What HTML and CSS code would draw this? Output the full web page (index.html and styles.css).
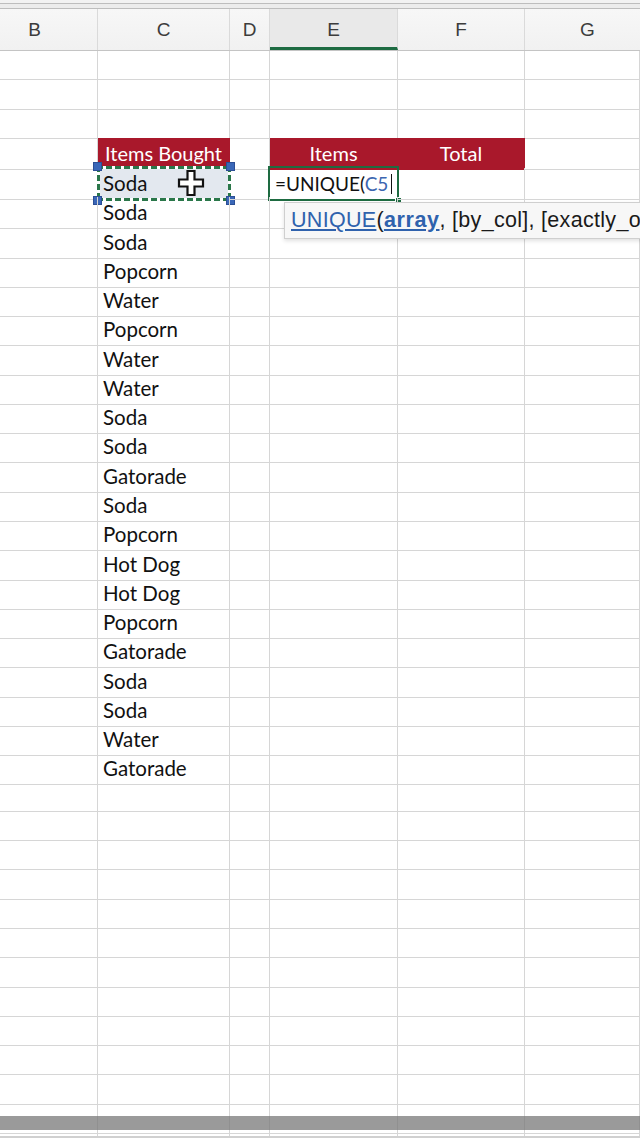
FILE: index.html
```html
<!DOCTYPE html>
<html>
<head>
<meta charset="utf-8">
<title>Sheet</title>
<link rel="stylesheet" href="styles.css">
</head>
<body>
<div class="app">
  <div class="topstrip"></div>
  <div class="colheads">
    <div class="ch ch-b">B</div>
    <div class="ch">C</div>
    <div class="ch">D</div>
    <div class="ch active">E</div>
    <div class="ch">F</div>
    <div class="ch ch-g">G</div>
  </div>
  <div class="sheet">
    <div class="row"><div class="cell"></div><div class="cell"></div><div class="cell"></div><div class="cell"></div><div class="cell"></div><div class="cell"></div></div>
    <div class="row"><div class="cell"></div><div class="cell"></div><div class="cell"></div><div class="cell"></div><div class="cell"></div><div class="cell"></div></div>
    <div class="row"><div class="cell"></div><div class="cell"></div><div class="cell"></div><div class="cell"></div><div class="cell"></div><div class="cell"></div></div>
    <div class="row"><div class="cell"></div><div class="cell hdr">Items Bought</div><div class="cell"></div><div class="cell hdr">Items</div><div class="cell hdr">Total</div><div class="cell"></div></div>
    <div class="row">
      <div class="cell"></div>
      <div class="cell txt sel">Soda
        <span class="ants"></span>
        <span class="hd tl"></span><span class="hd tr"></span><span class="hd bl"></span><span class="hd br"></span>
        <svg class="cursor" width="28" height="28" viewBox="0 0 28 28"><path d="M10.5 2h7v8.5H26v7h-8.5V26h-7v-8.5H2v-7h8.5z" fill="#fff" stroke="#111" stroke-width="2.2" stroke-linejoin="miter"/></svg>
      </div>
      <div class="cell"></div>
      <div class="cell edit"><span class="formula">=UNIQUE(<span class="ref">C5</span></span><span class="caret"></span><span class="editbox"></span><span class="fillh"></span></div>
      <div class="cell"></div><div class="cell"></div>
    </div>
    <div class="row"><div class="cell"></div><div class="cell txt">Soda</div><div class="cell"></div><div class="cell"></div><div class="cell"></div><div class="cell"></div></div>
    <div class="row"><div class="cell"></div><div class="cell txt">Soda</div><div class="cell"></div><div class="cell"></div><div class="cell"></div><div class="cell"></div></div>
    <div class="row"><div class="cell"></div><div class="cell txt">Popcorn</div><div class="cell"></div><div class="cell"></div><div class="cell"></div><div class="cell"></div></div>
    <div class="row"><div class="cell"></div><div class="cell txt">Water</div><div class="cell"></div><div class="cell"></div><div class="cell"></div><div class="cell"></div></div>
    <div class="row"><div class="cell"></div><div class="cell txt">Popcorn</div><div class="cell"></div><div class="cell"></div><div class="cell"></div><div class="cell"></div></div>
    <div class="row"><div class="cell"></div><div class="cell txt">Water</div><div class="cell"></div><div class="cell"></div><div class="cell"></div><div class="cell"></div></div>
    <div class="row"><div class="cell"></div><div class="cell txt">Water</div><div class="cell"></div><div class="cell"></div><div class="cell"></div><div class="cell"></div></div>
    <div class="row"><div class="cell"></div><div class="cell txt">Soda</div><div class="cell"></div><div class="cell"></div><div class="cell"></div><div class="cell"></div></div>
    <div class="row"><div class="cell"></div><div class="cell txt">Soda</div><div class="cell"></div><div class="cell"></div><div class="cell"></div><div class="cell"></div></div>
    <div class="row"><div class="cell"></div><div class="cell txt">Gatorade</div><div class="cell"></div><div class="cell"></div><div class="cell"></div><div class="cell"></div></div>
    <div class="row"><div class="cell"></div><div class="cell txt">Soda</div><div class="cell"></div><div class="cell"></div><div class="cell"></div><div class="cell"></div></div>
    <div class="row"><div class="cell"></div><div class="cell txt">Popcorn</div><div class="cell"></div><div class="cell"></div><div class="cell"></div><div class="cell"></div></div>
    <div class="row"><div class="cell"></div><div class="cell txt">Hot Dog</div><div class="cell"></div><div class="cell"></div><div class="cell"></div><div class="cell"></div></div>
    <div class="row"><div class="cell"></div><div class="cell txt">Hot Dog</div><div class="cell"></div><div class="cell"></div><div class="cell"></div><div class="cell"></div></div>
    <div class="row"><div class="cell"></div><div class="cell txt">Popcorn</div><div class="cell"></div><div class="cell"></div><div class="cell"></div><div class="cell"></div></div>
    <div class="row"><div class="cell"></div><div class="cell txt">Gatorade</div><div class="cell"></div><div class="cell"></div><div class="cell"></div><div class="cell"></div></div>
    <div class="row"><div class="cell"></div><div class="cell txt">Soda</div><div class="cell"></div><div class="cell"></div><div class="cell"></div><div class="cell"></div></div>
    <div class="row"><div class="cell"></div><div class="cell txt">Soda</div><div class="cell"></div><div class="cell"></div><div class="cell"></div><div class="cell"></div></div>
    <div class="row"><div class="cell"></div><div class="cell txt">Water</div><div class="cell"></div><div class="cell"></div><div class="cell"></div><div class="cell"></div></div>
    <div class="row"><div class="cell"></div><div class="cell txt">Gatorade</div><div class="cell"></div><div class="cell"></div><div class="cell"></div><div class="cell"></div></div>
    <div class="row"><div class="cell"></div><div class="cell"></div><div class="cell"></div><div class="cell"></div><div class="cell"></div><div class="cell"></div></div>
    <div class="row"><div class="cell"></div><div class="cell"></div><div class="cell"></div><div class="cell"></div><div class="cell"></div><div class="cell"></div></div>
    <div class="row"><div class="cell"></div><div class="cell"></div><div class="cell"></div><div class="cell"></div><div class="cell"></div><div class="cell"></div></div>
    <div class="row"><div class="cell"></div><div class="cell"></div><div class="cell"></div><div class="cell"></div><div class="cell"></div><div class="cell"></div></div>
    <div class="row"><div class="cell"></div><div class="cell"></div><div class="cell"></div><div class="cell"></div><div class="cell"></div><div class="cell"></div></div>
    <div class="row"><div class="cell"></div><div class="cell"></div><div class="cell"></div><div class="cell"></div><div class="cell"></div><div class="cell"></div></div>
    <div class="row"><div class="cell"></div><div class="cell"></div><div class="cell"></div><div class="cell"></div><div class="cell"></div><div class="cell"></div></div>
    <div class="row"><div class="cell"></div><div class="cell"></div><div class="cell"></div><div class="cell"></div><div class="cell"></div><div class="cell"></div></div>
    <div class="row"><div class="cell"></div><div class="cell"></div><div class="cell"></div><div class="cell"></div><div class="cell"></div><div class="cell"></div></div>
    <div class="row"><div class="cell"></div><div class="cell"></div><div class="cell"></div><div class="cell"></div><div class="cell"></div><div class="cell"></div></div>
    <div class="row"><div class="cell"></div><div class="cell"></div><div class="cell"></div><div class="cell"></div><div class="cell"></div><div class="cell"></div></div>
    <div class="row"><div class="cell"></div><div class="cell"></div><div class="cell"></div><div class="cell"></div><div class="cell"></div><div class="cell"></div></div>
    <div class="row"><div class="cell"></div><div class="cell"></div><div class="cell"></div><div class="cell"></div><div class="cell"></div><div class="cell"></div></div>
  </div>
  <div class="tooltip"><span class="fn">UNIQUE</span>(<span class="fn arg">array</span>, [by_col], [exactly_once])</div>
  <div class="hscroll"><div class="thumb"></div></div>
</div>
</body>
</html>
```
FILE: styles.css
```css
* { box-sizing: border-box; }
html, body { margin: 0; padding: 0; background: #fff; }
.app {
  position: relative;
  width: 640px;
  height: 1138px;
  overflow: hidden;
  font-family: "Lato", "Liberation Sans", sans-serif;
  color: #111;
}
.topstrip {
  height: 9px;
  background: #ececec;
  border-top: 3px solid #f2f2f2;
  border-bottom: 1px solid #bdbdbd;
  box-shadow: inset 0 1px 0 #bdbdbd;
}
.colheads {
  display: grid;
  grid-template-columns: 98px 132px 40px 128px 127px 115px;
  height: 42px;
  background: linear-gradient(#f7f7f7, #f1f1f1);
  border-bottom: 1px solid #c4c4c4;
}
.ch {
  display: flex;
  align-items: center;
  justify-content: center;
  border-right: 1px solid #dadada;
  font-family: "Liberation Sans", Arial, sans-serif;
  font-size: 19px;
  color: #3c3c3c;
}
.ch-b { padding-right: 28px; }
.ch-g { padding-left: 10px; border-right: none; }
.ch.active {
  background: #e9e9e9;
  border-bottom: 3px solid #1d6b42;
  padding-top: 3px;
}
.sheet { display: block; }
.row {
  display: grid;
  grid-template-columns: 98px 132px 40px 128px 127px 115px;
  height: 29.28px;
}
.cell {
  position: relative;
  border-right: 1px solid #d6d6d6;
  border-bottom: 1px solid #d6d6d6;
  font-size: 20.5px;
  line-height: 31px;
  white-space: nowrap;
}
.txt { padding-left: 5px; }
.hdr {
  background: #a9182b;
  border-color: #a9182b;
  color: #fff;
  text-align: center;
  margin-top: -1px;
  line-height: 31px;
  font-size: 20px;
}
.sel { background: #e3e8ef; }
.ants {
  position: absolute;
  left: -1px; right: -2px; top: -2px; bottom: -2px;
  background:
    repeating-linear-gradient(90deg, #2a774a 0 6px, #ffffff 6px 9px) left top / 100% 3px no-repeat,
    repeating-linear-gradient(90deg, #2a774a 0 6px, #ffffff 6px 9px) left bottom / 100% 3px no-repeat,
    repeating-linear-gradient(180deg, #2a774a 0 6px, #ffffff 6px 9px) left top / 3px 100% no-repeat,
    repeating-linear-gradient(180deg, #2a774a 0 6px, #ffffff 6px 9px) right top / 3px 100% no-repeat;
}
.hd {
  position: absolute;
  width: 9px;
  height: 9px;
  background: #3a67b8;
  border: 1px solid #2c4f95;
}
.hd.tl { left: -5px; top: -6px; }
.hd.tr { right: -6px; top: -6px; }
.hd.bl { left: -5px; bottom: -6px; }
.hd.br { right: -6px; bottom: -6px; }
.cursor {
  position: absolute;
  left: 79px;
  top: 1px;
}
.edit { padding-left: 5px; font-size: 19px; }
.formula { font-family: "Lato", "Liberation Sans", sans-serif; }
.ref { color: #3c66b0; }
.caret {
  display: inline-block;
  width: 1px;
  height: 20px;
  background: #111;
  margin-left: 3px;
  vertical-align: -3px;
}
.editbox {
  position: absolute;
  left: -2px; right: -2px; top: -2px; bottom: -2px;
  border: 2px solid #1e6b41;
}
.fillh {
  position: absolute;
  right: -5px;
  bottom: -5px;
  width: 7px;
  height: 7px;
  background: #1e6b41;
  border: 1px solid #fff;
}
.tooltip {
  position: absolute;
  left: 284px;
  top: 202px;
  width: 420px;
  height: 37px;
  background: #f7f7f7;
  border: 1px solid #cfcfcf;
  box-shadow: 0 2px 4px rgba(0,0,0,0.12);
  padding-left: 6px;
  font-family: "Liberation Sans", Arial, sans-serif;
  font-size: 21.5px;
  letter-spacing: 0.3px;
  line-height: 35px;
  color: #1a1a1a;
  white-space: nowrap;
}
.fn { color: #2f62ad; text-decoration: underline; text-underline-offset: 2px; }
.arg { font-weight: bold; letter-spacing: 0.6px; }
.hscroll {
  position: absolute;
  left: 0; right: 0; bottom: 0;
  height: 33px;
  padding-top: 11px;
  border-bottom: 2px solid #d0d0d0;
}
.thumb {
  height: 14px;
  background: rgba(120,120,120,0.75);
}
```
